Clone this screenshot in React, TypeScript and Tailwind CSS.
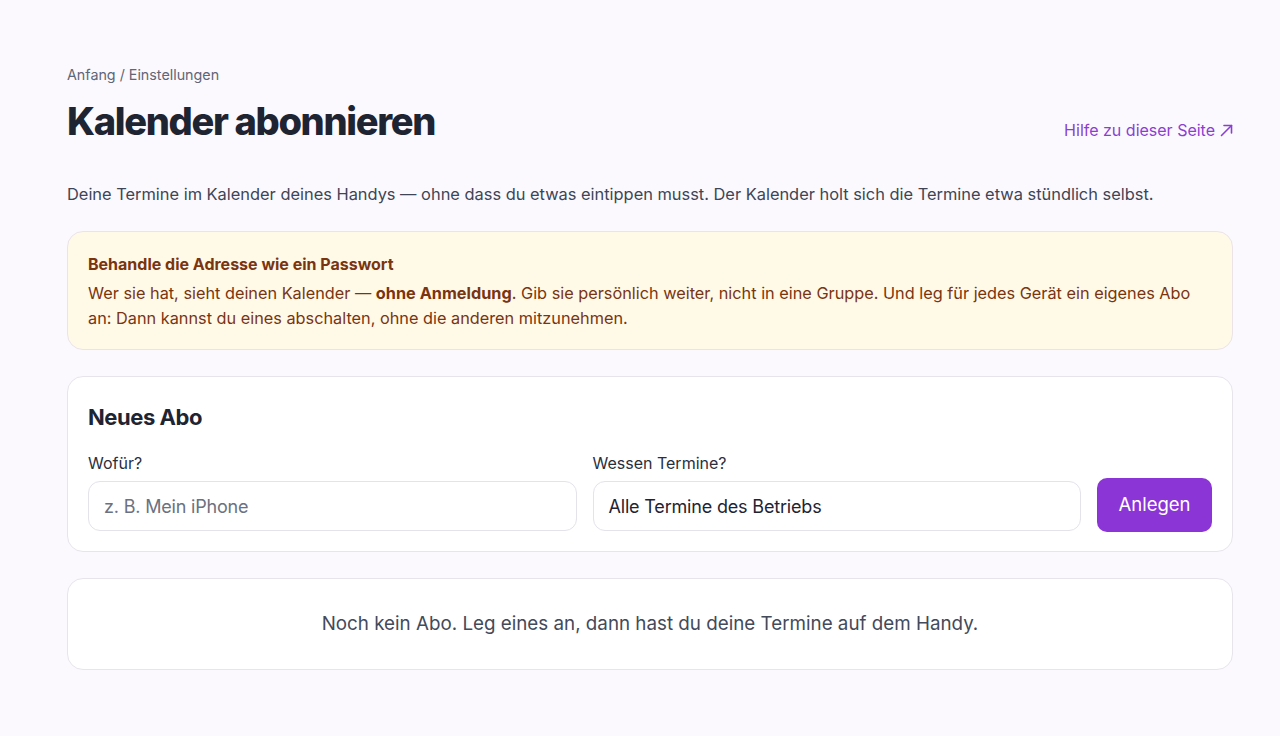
import { useState } from 'react';

function App() {
  const [label, setLabel] = useState('');

  return (
    <div className="min-h-screen bg-[#fbf9fd] font-['Inter','Noto_Sans',sans-serif] text-[#1f2433]">
      <div className="pl-[67px] pr-[47px] pt-[66px] pb-12">
        <div className="text-[14.3px] leading-[18px] text-[#5f6677]">Anfang / Einstellungen</div>

        <div className="mt-[13px] flex items-end justify-between">
          <h1 className="text-[38px] leading-[48px] font-extrabold tracking-[-0.035em] text-[#1f2433]">
            Kalender abonnieren
          </h1>
          <a href="#" className="mb-[4px] flex items-center gap-[5px] text-[16px] leading-[22px] text-[#8a3fd0]">
            Hilfe zu dieser Seite
            <svg width="13" height="13" viewBox="0 0 13 13" fill="none" stroke="currentColor" strokeWidth="1.6" strokeLinecap="round" strokeLinejoin="round">
              <path d="M1.5 11.5 L11.5 1.5" />
              <path d="M4 1.5 H11.5 V9" />
            </svg>
          </a>
        </div>

        <p className="mt-[37px] text-[16.4px] leading-[24px] text-[#3d4556]">
          Deine Termine im Kalender deines Handys — ohne dass du etwas eintippen musst. Der Kalender holt sich die Termine etwa stündlich selbst.
        </p>

        <div className="mt-[25px] rounded-[16px] border border-[#ebe3e8] bg-[#fffae8] px-[20px] pt-[21px] pb-[18px] text-[#7a3410]">
          <div className="text-[16px] leading-[22px] font-bold">Behandle die Adresse wie ein Passwort</div>
          <p className="mt-[6px] text-[16.3px] leading-[25px]">
            Wer sie hat, sieht deinen Kalender — <strong className="font-bold">ohne Anmeldung</strong>. Gib sie persönlich weiter, nicht in eine Gruppe. Und leg für jedes Gerät ein eigenes Abo an: Dann kannst du eines abschalten, ohne die anderen mitzunehmen.
          </p>
        </div>

        <div className="mt-[26px] rounded-[16px] border border-[#e8e4ec] bg-white px-[20px] pt-[25px] pb-[20px]">
          <h2 className="text-[22px] leading-[30px] font-bold tracking-[-0.02em] text-[#1f2433]">Neues Abo</h2>
          <div className="mt-[20px] flex items-end gap-[16px]">
            <label className="flex flex-1 flex-col">
              <span className="text-[16px] leading-[22px] text-[#2a2f3d]">Wofür?</span>
              <input
                value={label}
                onChange={(e) => setLabel(e.target.value)}
                placeholder="z. B. Mein iPhone"
                className="mt-[7px] h-[50px] rounded-[12px] border border-[#e4e2ea] bg-white px-[15px] text-[18px] tracking-[-0.01em] text-[#1f2433] placeholder:text-[#6b7180] outline-none"
              />
            </label>
            <label className="flex flex-1 flex-col">
              <span className="text-[16px] leading-[22px] text-[#2a2f3d]">Wessen Termine?</span>
              <div className="mt-[7px] flex h-[50px] items-center rounded-[12px] border border-[#e4e2ea] bg-white px-[15px] text-[18px] tracking-[-0.01em] text-[#1f2433]">
                Alle Termine des Betriebs
              </div>
            </label>
            <button className="mb-[-1px] h-[54px] w-[115px] rounded-[10px] bg-[#8b35d6] text-[18.5px] text-white">
              Anlegen
            </button>
          </div>
        </div>

        <div className="mt-[26px] flex h-[92px] items-center justify-center rounded-[16px] border border-[#e8e4ec] bg-white text-[18.8px] text-[#434a5a]">
          Noch kein Abo. Leg eines an, dann hast du deine Termine auf dem Handy.
        </div>
      </div>
    </div>
  );
}

export default App;
